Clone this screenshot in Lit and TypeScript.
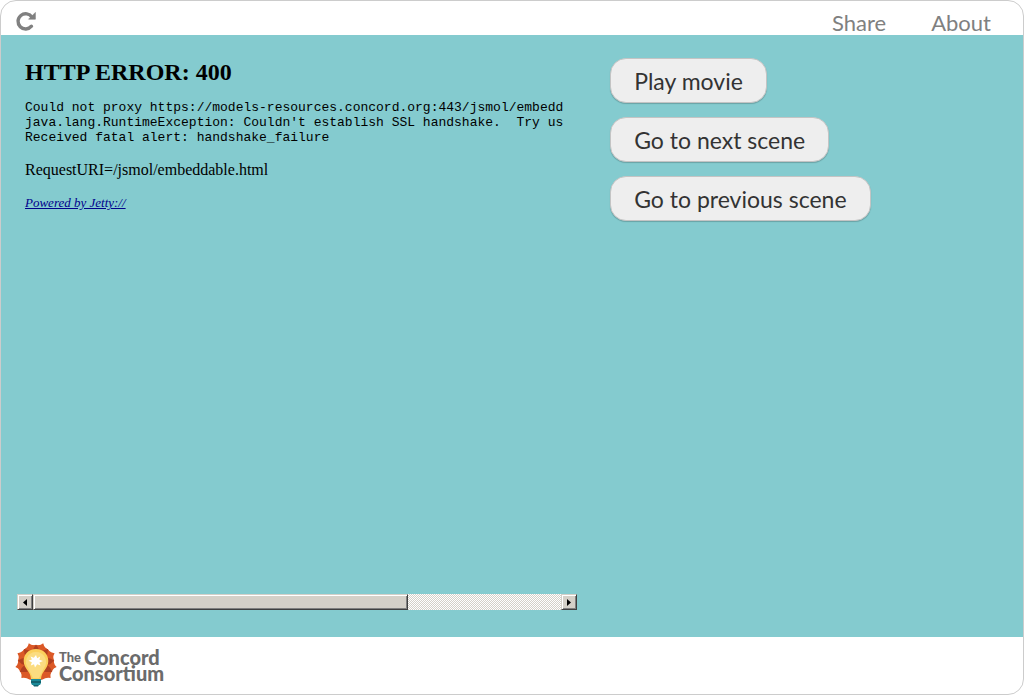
import { LitElement, html, css, svg } from "lit";
import { customElement } from "lit/decorators.js";

const PETAL_ANGLES = [20, -20, 62, -62, 101, -101, 136, -136];
const OVERLAP_ANGLES = [0, 41, -41, 82, -82, 118, -118];

@customElement("concord-logo")
class ConcordLogo extends LitElement {
  static styles = css`
    :host {
      display: flex;
      align-items: center;
      gap: 1px;
      color: #6b6b6b;
      font-family: Lato, sans-serif;
      font-weight: 900;
    }
    .bulb {
      width: 43px;
      height: 46px;
      flex: none;
    }
    .name {
      font-size: 20px;
      line-height: 16px;
      white-space: nowrap;
    }
    .line {
      display: flex;
      gap: 3px;
    }
    .the {
      font-size: 13px;
    }
  `;

  render() {
    return html`
      <svg class="bulb" viewBox="0 0 43 46" aria-hidden="true">
        ${PETAL_ANGLES.map(
          (a) => svg`<path fill="#db5927" transform="rotate(${a} 21 21)"
            d="M21 21 L10.500 8 Q12 4.500 17 3.500 Q19.500 2.500 21 0 Q22.500 2.500 25 3.500 Q30 4.500 31.500 8 Z"/>`
        )}
        ${OVERLAP_ANGLES.map(
          (a) => svg`<path fill="#b04021" transform="rotate(${a} 21 21)"
            d="M21 2.500 Q24 6 25 11 L21 17 L17 11 Q18 6 21 2.500 Z"/>`
        )}
        <path fill="#fbd05c" d="M21 7c-7.500 0-12.300 5.300-12.300 12 0 4 1.800 7 4 9.700 1.800 2.300 3 4.500 3.300 8.300h10c.3-3.800 1.500-6 3.300-8.300 2.200-2.700 4-5.700 4-9.700 0-6.700-4.800-12-12.300-12z"/>
        <path fill="#fbdc80" d="M21 10a10 10 0 0 0-8 16l5 10h6l5-10a10 10 0 0 0-8-16z"/>
        <path fill="#fff" d="M21 13l1.200 3.200 3-1.600-.8 3.200 3.600 1.200-3.600 1.400 1.200 3.200-3.400-1.400L20 25.500l-1-3.300-3.200 1.200 1-3.200-3.300-1.400 3.400-1.200-1.400-3.200 3.300 1.400z"/>
        <path fill="#1b8a99" d="M16 37h10v2H16z"/>
        <path fill="#14636f" d="M16 39h10v2H16z"/>
        <path fill="#1b8a99" d="M16 41h10l-1 2h-8z"/>
        <path fill="#14636f" d="M18 43h6l-1 1.500h-4z"/>
      </svg>
      <div class="name">
        <div class="line"><span class="the">The</span><span>Concord</span></div>
        <div class="line">Consortium</div>
      </div>
    `;
  }
}

@customElement("error-frame")
class ErrorFrame extends LitElement {
  static styles = css`
    :host {
      display: flex;
      flex-direction: column;
      min-width: 0;
      color: #000;
      font-family: "Liberation Serif", serif;
    }
    .page {
      flex: 1;
      min-height: 0;
      padding: 0 0 0 8px;
      overflow: hidden;
    }
    .title {
      margin: 0 0 14px;
      font-size: 24px;
      line-height: 28px;
    }
    .trace {
      margin: 0 0 16px;
      font-family: "Liberation Mono", monospace;
      font-size: 13px;
      line-height: 15px;
    }
    .uri {
      margin: 0 0 16px;
      font-size: 16px;
      line-height: 18px;
    }
    .powered {
      font-size: 13px;
      line-height: 15px;
      font-style: italic;
    }
    .link {
      color: #00008b;
    }
    .scrollbar {
      display: flex;
      height: 16px;
      background: repeating-conic-gradient(#fff 0 25%, #d4d0c8 0 50%) 0 0 / 2px 2px;
    }
    .arrow,
    .thumb {
      box-sizing: border-box;
      background: #d4d0c8;
      border: 1px solid;
      border-color: #d4d0c8 #404040 #404040 #d4d0c8;
      box-shadow: inset 1px 1px #fff, inset -1px -1px #808080;
    }
    .arrow {
      display: grid;
      place-items: center;
      width: 16px;
      padding: 0;
      flex: none;
    }
    .glyph {
      width: 4px;
      height: 7px;
    }
    .rail {
      flex: 1;
      display: flex;
    }
    .thumb {
      width: 71%;
    }
  `;

  render() {
    return html`
      <div class="page">
        <h2 class="title">HTTP ERROR: 400</h2>
        <pre class="trace">
Could not proxy https://models-resources.concord.org:443/jsmol/embedd
java.lang.RuntimeException: Couldn't establish SSL handshake.  Try us
Received fatal alert: handshake_failure</pre>
        <p class="uri">RequestURI=/jsmol/embeddable.html</p>
        <div class="powered"><a class="link" href="#">Powered by Jetty://</a></div>
      </div>
      <div class="scrollbar">
        <button class="arrow" aria-label="Scroll left">
          <svg class="glyph" viewBox="0 0 4 7"><path d="M4 0v7L0 3.500z" /></svg>
        </button>
        <div class="rail"><div class="thumb"></div></div>
        <button class="arrow" aria-label="Scroll right">
          <svg class="glyph" viewBox="0 0 4 7"><path d="M0 0v7l4-3.500z" /></svg>
        </button>
      </div>
    `;
  }
}

@customElement("app-root")
class AppRoot extends LitElement {
  static styles = css`
    :host {
      display: flex;
      flex-direction: column;
      box-sizing: border-box;
      min-height: 100vh;
      overflow: hidden;
      border: 1px solid #ccc;
      border-radius: 16px;
      background: #fff;
      font-family: Lato, sans-serif;
    }
    .top {
      display: flex;
      align-items: flex-end;
      justify-content: space-between;
      height: 34px;
      padding: 0 32px 0 15px;
    }
    .reload {
      display: flex;
      padding: 0 0 4px;
      border: 0;
      background: none;
      color: #808080;
    }
    .reload-icon {
      width: 20px;
      height: 20px;
    }
    .links {
      display: flex;
      gap: 45px;
    }
    .nav-link {
      color: #808080;
      font-size: 22px;
      line-height: 24px;
      text-decoration: none;
    }
    .stage {
      flex: 1;
      display: grid;
      grid-template-columns: minmax(0, 24fr) minmax(0, 17fr);
      column-gap: 33px;
      padding: 23px 16px 27px;
      background: #84cbcf;
    }
    .actions {
      display: flex;
      flex-direction: column;
      align-items: flex-start;
      gap: 14px;
    }
    .action {
      padding: 1px 23px 0;
      border: 1px solid #c4c4c4;
      border-radius: 16px;
      background: #eee;
      box-shadow: 0 1px 1px rgba(0, 0, 0, 0.2);
      color: #333;
      font-family: inherit;
      font-size: 23px;
      line-height: 42px;
    }
    .bottom {
      display: flex;
      align-items: flex-start;
      height: 52px;
      padding: 5px 14px 0;
    }
  `;

  render() {
    return html`
      <header class="top">
        <button class="reload" aria-label="Reload">
          <svg class="reload-icon" viewBox="0 0 20 20" aria-hidden="true">
            <path d="M16 6.200A7.600 7.600 0 1 0 15.500 15.200" fill="none" stroke="currentColor" stroke-width="3.400" stroke-linecap="round" />
            <path d="M19.400 1.400v6.800h-6.800z" fill="currentColor" stroke="currentColor" stroke-width=".6" stroke-linejoin="round" />
          </svg>
        </button>
        <nav class="links">
          <a class="nav-link" href="#">Share</a>
          <a class="nav-link" href="#">About</a>
        </nav>
      </header>
      <main class="stage">
        <error-frame></error-frame>
        <div class="actions">
          <button class="action">Play movie</button>
          <button class="action">Go to next scene</button>
          <button class="action">Go to previous scene</button>
        </div>
      </main>
      <footer class="bottom"><concord-logo></concord-logo></footer>
    `;
  }
}
